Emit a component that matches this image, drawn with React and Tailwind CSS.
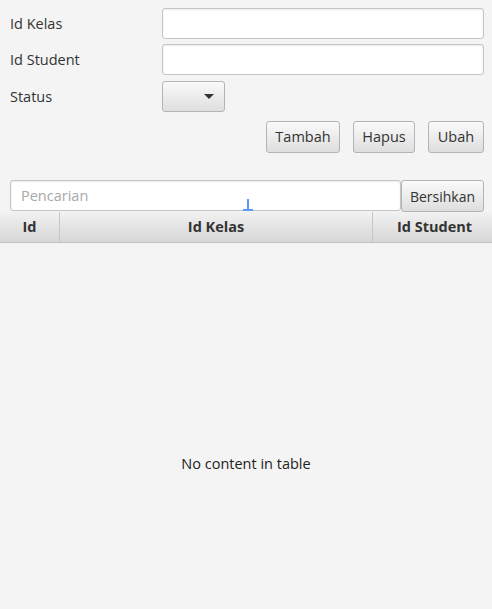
export default function App() {
  const field =
    "h-[31px] bg-white border border-[#c4c4c4] rounded-[3px] shadow-[inset_0_1px_2px_rgba(0,0,0,0.08)]";
  const btn =
    "h-[32px] border border-[#b4b4b4] rounded-[3px] bg-gradient-to-b from-[#fafafa] to-[#dedede] text-[#333] text-[14.5px] flex items-center justify-center";
  return (
    <div
      className="relative w-[492px] h-[609px] bg-[#f4f4f4] flex flex-col text-[#333] overflow-hidden"
      style={{ fontFamily: '"Open Sans", "Noto Sans", sans-serif' }}
    >
      <div className="pl-[10px] pr-[8px] pt-[8px] flex flex-col">
        <div className="flex items-center">
          <div className="w-[152px] text-[14.5px]">Id Kelas</div>
          <div className={field + " flex-1"} />
        </div>
        <div className="flex items-center mt-[5px]">
          <div className="w-[152px] text-[14.5px]">Id Student</div>
          <div className={field + " flex-1"} />
        </div>
        <div className="flex items-center mt-[6px]">
          <div className="w-[152px] text-[14.5px]">Status</div>
          <div className="w-[63px] h-[31px] border border-[#b4b4b4] rounded-[3px] bg-gradient-to-b from-[#fafafa] to-[#dedede] flex items-center justify-end pr-[10px]">
            <div className="w-0 h-0 border-l-[5px] border-r-[5px] border-t-[5px] border-l-transparent border-r-transparent border-t-[#333]" />
          </div>
        </div>
        <div className="flex justify-end gap-[13px] mt-[9px]">
          <div className={btn + " w-[74px]"}>Tambah</div>
          <div className={btn + " w-[62px]"}>Hapus</div>
          <div className={btn + " w-[56px]"}>Ubah</div>
        </div>
      </div>
      <div className="flex pl-[10px] pr-[8px] mt-[27px]">
        <div className={field + " flex-1 flex items-center pl-[10px] text-[14.5px] text-[#a8a8a8]"}>
          Pencarian
        </div>
        <div className={btn + " w-[83px] h-[31px] text-[14px]"}>Bersihkan</div>
      </div>
      <div className="flex h-[31px] bg-gradient-to-b from-[#f2f2f2] to-[#d6d6d6] border-b border-[#c2c2c2] text-[14.5px] font-bold text-[#333]">
        <div className="w-[60px] border-r border-[#c6c6c6] flex items-center justify-center">Id</div>
        <div className="w-[313px] border-r border-[#c6c6c6] flex items-center justify-center">Id Kelas</div>
        <div className="flex-1 flex items-center justify-center pl-[4px]">Id Student</div>
      </div>
      <div className="flex-1 flex items-center justify-center text-[14.5px] text-[#222] pt-[75px]">
        No content in table
      </div>
      <div className="absolute left-[247px] top-[199px] w-[2px] h-[11px] bg-[#5b9bf8]" />
      <div className="absolute left-[243px] top-[209px] w-[10px] h-[2px] bg-[#5b9bf8]" />
    </div>
  );
}
